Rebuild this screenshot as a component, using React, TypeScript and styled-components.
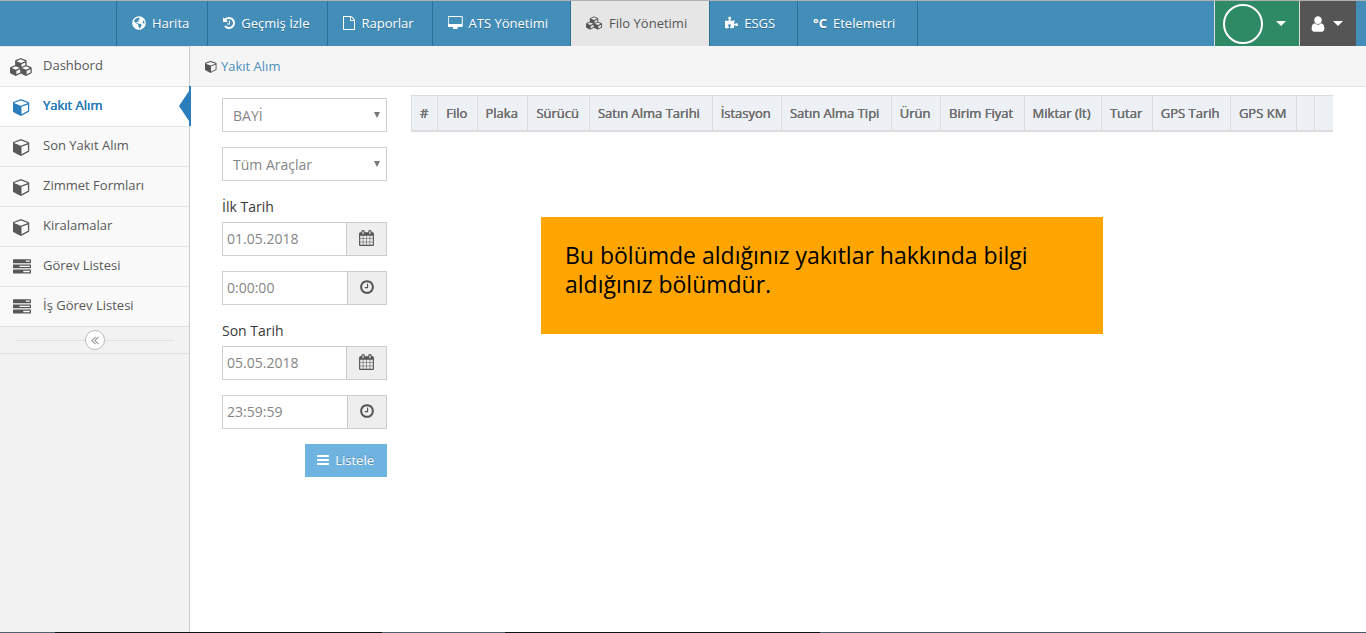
import React from "react";
import styled, { createGlobalStyle, css } from "styled-components";
import { FaGlobeAmericas, FaPuzzlePiece } from "react-icons/fa";

const GlobalStyle = createGlobalStyle`
  * { box-sizing: border-box; }
  body {
    margin: 0;
    background: #fff;
    color: #393939;
    font-family: "Open Sans", "Noto Sans", sans-serif;
    font-size: 13px;
    line-height: 20px;
  }
`;

const glyphs = {
  cube: {
    box: "0 0 1664 1792",
    d: "M832 1629l640-349v-636l-640 233v752zm-64-865l698-254-698-254-698 254zm832-252v768q0 35-18 65t-49 47l-704 384q-28 16-61 16t-61-16l-704-384q-31-17-49-47t-18-65v-768q0-40 23-73t61-50l704-256q22-8 44-8t44 8l704 256q38 17 61 50t23 73z",
  },
  cubes: {
    box: "0 0 2304 1792",
    d: "M640 1632l384-192v-314l-384 164v342zm-64-454l404-173-404-173-404 173zm1088 454l384-192v-314l-384 164v342zm-64-454l404-173-404-173-404 173zm-448-293l384-165v-266l-384 164v267zm-64-379l441-189-441-189-441 189zm1088 518v416q0 36-19 67t-52 47l-448 224q-25 14-57 14t-57-14l-448-224q-4-2-7-4-2 2-7 4l-448 224q-25 14-57 14t-57-14l-448-224q-33-16-52-47t-19-67v-416q0-38 21.500-70t56.500-48l434-186v-400q0-38 21.500-70t56.500-48l448-192q23-10 50-10t50 10l448 192q35 16 56.500 48t21.500 70v400l434 186q36 16 57 48t21 70z",
  },
  history: {
    box: "128 0 1536 1792",
    d: "M1664 896q0 156-61 298t-164 245-245 164-298 61q-172 0-327-72.500t-264-204.500q-7-10-6.500-22.500t8.500-20.500l137-138q10-9 25-9 16 2 23 12 73 95 179 147t225 52q104 0 198.500-40.500t163.500-109.500 109.500-163.500 40.500-198.500-40.500-198.500-109.500-163.500-163.500-109.500-198.500-40.500q-98 0-188 35.500t-160 101.500l137 138q31 30 14 69-17 40-59 40h-448q-26 0-45-19t-19-45v-448q0-42 40-59 39-17 69 14l130 129q107-101 244.500-156.500t284.500-55.500q156 0 298 61t245 164 164 245 61 298zm-640-288v448q0 14-9 23t-23 9h-320q-14 0-23-9t-9-23v-64q0-14 9-23t23-9h224v-352q0-14 9-23t23-9h64q14 0 23 9t9 23z",
  },
  file: {
    box: "128 0 1536 1792",
    d: "M1596 380q28 28 48 76t20 88v1152q0 40-28 68t-68 28h-1344q-40 0-68-28t-28-68v-1600q0-40 28-68t68-28h896q40 0 88 20t76 48zm-444-244v376h376q-10-29-22-41l-313-313q-12-12-41-22zm384 1528v-1024h-416q-40 0-68-28t-28-68v-416h-768v1536h1280z",
  },
  desktop: {
    box: "0 0 1856 1792",
    d: "M1728 992v-832q0-13-9.500-22.500t-22.500-9.500h-1600q-13 0-22.500 9.500t-9.500 22.500v832q0 13 9.500 22.500t22.500 9.500h1600q13 0 22.500-9.500t9.500-22.500zm128-832v1088q0 66-47 113t-113 47h-544q0 37 16 77.500t32 71 16 43.500q0 26-19 45t-45 19h-512q-26 0-45-19t-19-45q0-14 16-44t32-70 16-78h-544q-66 0-113-47t-47-113v-1088q0-66 47-113t113-47h1600q66 0 113 47t47 113z",
  },
  user: {
    box: "192 0 1408 1792",
    d: "M1536 1399q0 109-62.500 187t-150.500 78h-854q-88 0-150.500-78t-62.500-187q0-85 8.500-160.500t31.500-152 58.500-131 94-89 134.500-34.500q131 128 313 128t313-128q76 0 134.500 34.500t94 89 58.500 131 31.500 152 8.500 160.500zm-256-887q0 159-112.500 271.500t-271.500 112.500-271.500-112.500-112.500-271.500 112.500-271.500 271.500-112.500 271.500 112.500 112.500 271.500z",
  },
  calendar: {
    box: "64 0 1664 1792",
    d: "M192 1664h288v-288h-288v288zm352 0h320v-288h-320v288zm-352-352h288v-320h-288v320zm352 0h320v-320h-320v320zm-352-384h288v-288h-288v288zm736 736h320v-288h-320v288zm-384-736h320v-288h-320v288zm768 736h288v-288h-288v288zm-384-352h320v-320h-320v320zm-352-864v-288q0-13-9.500-22.500t-22.500-9.500h-64q-13 0-22.500 9.500t-9.500 22.500v288q0 13 9.500 22.500t22.500 9.500h64q13 0 22.500-9.500t9.500-22.500zm736 864h288v-320h-288v320zm-384-384h320v-288h-320v288zm384 0h288v-288h-288v288zm32-480v-288q0-13-9.500-22.500t-22.500-9.500h-64q-13 0-22.500 9.500t-9.500 22.500v288q0 13 9.500 22.500t22.500 9.500h64q13 0 22.500-9.500t9.500-22.500zm384-64v1280q0 52-38 90t-90 38h-1408q-52 0-90-38t-38-90v-1280q0-52 38-90t90-38h128v-96q0-66 47-113t113-47h64q66 0 113 47t47 113v96h384v-96q0-66 47-113t113-47h64q66 0 113 47t47 113v96h128q52 0 90 38t38 90z",
  },
  clock: {
    box: "128 0 1536 1792",
    d: "M1024 544v448q0 14-9 23t-23 9h-320q-14 0-23-9t-9-23v-64q0-14 9-23t23-9h224v-352q0-14 9-23t23-9h64q14 0 23 9t9 23zm416 352q0-148-73-273t-198-198-273-73-273 73-198 198-73 273 73 273 198 198 273 73 273-73 198-198 73-273zm224 0q0 209-103 385.500t-279.500 279.500-385.500 103-385.500-103-279.500-279.500-103-385.500 103-385.500 279.500-279.500 385.500-103 385.500 103 279.500 279.500 103 385.500z",
  },
  tasks: {
    box: "0 0 1792 1792",
    d: "M1024 1408h640v-128h-640v128zm-384-512h1024v-128h-1024v128zm640-512h384v-128h-384v128zm512 832v256q0 26-19 45t-45 19h-1664q-26 0-45-19t-19-45v-256q0-26 19-45t45-19h1664q26 0 45 19t19 45zm0-512v256q0 26-19 45t-45 19h-1664q-26 0-45-19t-19-45v-256q0-26 19-45t45-19h1664q26 0 45 19t19 45zm0-512v256q0 26-19 45t-45 19h-1664q-26 0-45-19t-19-45v-256q0-26 19-45t45-19h1664q26 0 45 19t19 45z",
  },
  bars: {
    box: "128 0 1536 1792",
    d: "M1664 1344v128q0 26-19 45t-45 19h-1408q-26 0-45-19t-19-45v-128q0-26 19-45t45-19h1408q26 0 45 19t19 45zm0-512v128q0 26-19 45t-45 19h-1408q-26 0-45-19t-19-45v-128q0-26 19-45t45-19h1408q26 0 45 19t19 45zm0-512v128q0 26-19 45t-45 19h-1408q-26 0-45-19t-19-45v-128q0-26 19-45t45-19h1408q26 0 45 19t19 45z",
  },
  doubleLeft: {
    box: "400 0 1024 1792",
    d: "M1011 1376q0 13-10 23l-50 50q-10 10-23 10t-23-10l-466-466q-10-10-10-23t10-23l466-466q10-10 23-10t23 10l50 50q10 10 10 23t-10 23l-393 393 393 393q10 10 10 23zm384 0q0 13-10 23l-50 50q-10 10-23 10t-23-10l-466-466q-10-10-10-23t10-23l466-466q10-10 23-10t23 10l50 50q10 10 10 23t-10 23l-393 393 393 393q10 10 10 23z",
  },
};

type GlyphName = keyof typeof glyphs;

const Svg = styled.svg`
  display: block;
  flex: none;
  fill: currentColor;
`;

function Glyph({ name, width, height }: { name: GlyphName; width: number; height: number }) {
  return (
    <Svg viewBox={glyphs[name].box} width={width} height={height} aria-hidden="true">
      <path d={glyphs[name].d} />
    </Svg>
  );
}

const Page = styled.div`
  display: flex;
  flex-direction: column;
  min-height: 100vh;
`;

const Header = styled.header`
  display: flex;
  height: 46px;
  border-top: 1px solid #b1b1b1;
  background: #438eb9;
  padding: 0 10px 0 116px;
`;

const Nav = styled.nav`
  display: flex;
  flex: 1;
`;

const NavLink = styled.a<{ $active?: boolean; $wide?: boolean }>`
  display: flex;
  align-items: center;
  gap: 6px;
  padding: 0 ${(p) => (p.$wide ? 22 : 18)}px 2px 15px;
  border-left: 1px solid #2c6f98;
  color: #fff;
  text-decoration: none;
  text-shadow: 0 1px 0 rgba(0, 0, 0, 0.25);
  white-space: nowrap;
  ${(p) =>
    p.$active &&
    css`
      background: #e6e6e6;
      color: #555;
      text-shadow: none;
    `}
`;

const NavEnd = styled.span`
  border-left: 1px solid #2c6f98;
`;

const Celsius = styled.span`
  font-weight: 700;
`;

const HeaderButton = styled.button<{ $tone: "green" | "dark" }>`
  display: flex;
  align-items: center;
  gap: ${(p) => (p.$tone === "green" ? 13 : 8)}px;
  padding: 0 13px 0 ${(p) => (p.$tone === "green" ? 8 : 11)}px;
  border: 0;
  border-left: 1px solid #ddd;
  background: ${(p) => (p.$tone === "green" ? "#2e8965" : "#555")};
  color: #fff;
`;

const Ring = styled.span`
  width: 40px;
  height: 40px;
  border: 2px solid #fff;
  border-radius: 50%;
`;

const Caret = styled.span`
  border: 5px solid transparent;
  border-top: 5px solid #fff;
  border-bottom: 0;
`;

const Body = styled.div`
  display: flex;
  flex: 1;
`;

const Sidebar = styled.aside`
  width: 190px;
  flex: none;
  border-right: 1px solid #ccc;
  background: #f2f2f2;
`;

const SideList = styled.ul`
  margin: 0;
  padding: 0;
  list-style: none;
`;

const SideItem = styled.li`
  border-top: 1px solid #e5e5e5;
`;

const SideLink = styled.a<{ $active?: boolean }>`
  display: flex;
  align-items: center;
  position: relative;
  height: 39px;
  padding-bottom: 4px;
  background: #f9f9f9;
  color: #585858;
  text-decoration: none;
  ${(p) =>
    p.$active &&
    css`
      background: #fff;
      color: #2b7dbc;
      text-shadow: 0 0 0 #2b7dbc, 0 0 0 #2b7dbc;
      &::before {
        content: "";
        position: absolute;
        right: 0;
        top: 4px;
        border: 15px solid transparent;
        border-right: 10px solid #2b7dbc;
        border-left: 0;
      }
      &::after {
        content: "";
        position: absolute;
        right: -2px;
        top: -1px;
        bottom: 0;
        width: 2px;
        background: #2b7dbc;
      }
    `}
`;

const SideIcon = styled.span`
  display: flex;
  justify-content: center;
  width: 43px;
  padding-top: 5px;
`;

const Collapse = styled.div`
  display: flex;
  align-items: center;
  height: 28px;
  padding: 0 15px;
  border: 1px solid #e0e0e0;
  border-width: 1px 0;

  &::before,
  &::after {
    content: "";
    flex: 1;
    height: 1px;
    background: #e0e0e0;
  }
`;

const CollapseButton = styled.button`
  display: grid;
  place-items: center;
  width: 20px;
  height: 20px;
  padding: 0;
  border: 1px solid #bbb;
  border-radius: 50%;
  background: #fff;
  color: #999;
`;

const Main = styled.main`
  flex: 1;
  min-width: 0;
`;

const Breadcrumb = styled.div`
  display: flex;
  align-items: center;
  gap: 4px;
  height: 41px;
  padding: 0 15px;
  border-bottom: 1px solid #e5e5e5;
  background: #f5f5f5;
  color: #555;
`;

const CrumbLink = styled.a`
  color: #4c8fbd;
  text-decoration: none;
`;

const Content = styled.div`
  display: flex;
  align-items: flex-start;
  gap: 24px;
  padding: 8px 33px 0 32px;
`;

const Filters = styled.form`
  display: flex;
  flex: none;
  flex-direction: column;
  gap: 15px;
  width: 165px;
  padding-top: 3px;
`;

const SelectBox = styled.div`
  display: flex;
  position: relative;
  &::after {
    content: "";
    position: absolute;
    right: 7px;
    top: 14px;
    border: 3px solid transparent;
    border-top: 6px solid #777;
    border-bottom: 0;
    pointer-events: none;
  }
`;

const Select = styled.select`
  appearance: none;
  width: 100%;
  height: 34px;
  padding: 0 10px;
  border: 1px solid #d0d0d0;
  border-radius: 0;
  background: #fff;
  color: #858585;
  font: 14px "Open Sans", sans-serif;
`;

const Label = styled.label`
  display: block;
  height: 26px;
  font-size: 14px;
  line-height: 21px;
`;

const InputGroup = styled.div`
  display: flex;
  height: 34px;
`;

const Input = styled.input`
  flex: 1;
  min-width: 0;
  padding: 0 4px 2px;
  border: 1px solid #d0d0d0;
  border-right: 0;
  color: #858585;
  font: 14px "Open Sans", sans-serif;
`;

const Addon = styled.button<{ $narrow?: boolean }>`
  display: flex;
  justify-content: center;
  width: ${(p) => (p.$narrow ? 40 : 41)}px;
  padding: 7px 0 0;
  border: 1px solid #ccc;
  background: #eee;
  color: #555;
`;

const Submit = styled.button`
  display: flex;
  align-items: center;
  align-self: flex-end;
  gap: 6px;
  height: 33px;
  padding: 0 13px 2px 12px;
  border: 0;
  background: #6fb3e0;
  color: #fff;
  font: 13px "Open Sans", sans-serif;
  text-shadow: 0 -1px 0 rgba(0, 0, 0, 0.25);
`;

const Results = styled.section`
  flex: 1;
  min-width: 0;
`;

const Table = styled.table`
  width: 100%;
  border-collapse: separate;
  border-spacing: 0;
  border-left: 1px solid #ddd;
`;

const Th = styled.th`
  height: 37px;
  padding: 0 8px;
  border: 1px solid #ddd;
  border-width: 1px 1px 2px 0;
  background: #edf1f6;
  color: #707070;
  font-weight: 400;
  text-align: left;
  text-shadow: 0 0 0 #707070, 0 0 0 #707070;
  white-space: nowrap;
  &:last-child {
    width: 18px;
    border-right: 0;
  }
`;

const Notice = styled.p`
  max-width: 562px;
  min-height: 117px;
  margin: 85px 0 0 130px;
  padding: 24px;
  background: #ffa500;
  color: #000;
  font-size: 23px;
  line-height: 29px;
`;

const BottomEdge = styled.footer`
  height: 1px;
  margin-top: -1px;
  position: relative;
  background: linear-gradient(
    to right,
    #4d616d 0 4%,
    #101014 4% 28%,
    #4d616d 28% 37%,
    #101014 37% 60%,
    #465863 60% 100%
  );
`;

const sections = [
  { label: "Harita", icon: <FaGlobeAmericas size={14} /> },
  { label: "Geçmiş İzle", icon: <Glyph name="history" width={12} height={14} /> },
  { label: "Raporlar", icon: <Glyph name="file" width={12} height={14} /> },
  { label: "ATS Yönetimi", icon: <Glyph name="desktop" width={15} height={14} />, wide: true },
  { label: "Filo Yönetimi", icon: <Glyph name="cubes" width={17} height={14} />, wide: true, active: true },
  { label: "ESGS", icon: <FaPuzzlePiece size={13} />, wide: true },
  { label: "Etelemetri", icon: <Celsius>°C</Celsius>, wide: true },
];

const menu: { label: string; icon: GlyphName; width: number; active?: boolean }[] = [
  { label: "Dashbord", icon: "cubes", width: 23 },
  { label: "Yakıt Alım", icon: "cube", width: 17, active: true },
  { label: "Son Yakıt Alım", icon: "cube", width: 17 },
  { label: "Zimmet Formları", icon: "cube", width: 17 },
  { label: "Kiralamalar", icon: "cube", width: 17 },
  { label: "Görev Listesi", icon: "tasks", width: 18 },
  { label: "İş Görev Listesi", icon: "tasks", width: 18 },
];

const columns = [
  "#", "Filo", "Plaka", "Sürücü", "Satın Alma Tarihi", "İstasyon", "Satın Alma Tipi",
  "Ürün", "Birim Fiyat", "Miktar (lt)", "Tutar", "GPS Tarih", "GPS KM", "", "",
];

function DateRange({ id, label, date, time }: { id: string; label: string; date: string; time: string }) {
  return (
    <>
      <div>
        <Label htmlFor={id}>{label}</Label>
        <InputGroup>
          <Input id={id} defaultValue={date} />
          <Addon type="button" aria-label={`${label} takvim`}>
            <Glyph name="calendar" width={15} height={16} />
          </Addon>
        </InputGroup>
      </div>
      <InputGroup>
        <Input aria-label={`${label} saat`} defaultValue={time} />
        <Addon type="button" $narrow aria-label={`${label} saat seç`}>
          <Glyph name="clock" width={14} height={16} />
        </Addon>
      </InputGroup>
    </>
  );
}

export default function App() {
  return (
    <Page>
      <GlobalStyle />
      <Header>
        <Nav>
          {sections.map((s) => (
            <NavLink key={s.label} href="#" $active={s.active} $wide={s.wide}>
              {s.icon}
              {s.label}
            </NavLink>
          ))}
          <NavEnd />
        </Nav>
        <HeaderButton $tone="green" aria-label="Firma">
          <Ring />
          <Caret />
        </HeaderButton>
        <HeaderButton $tone="dark" aria-label="Kullanıcı">
          <Glyph name="user" width={14} height={18} />
          <Caret />
        </HeaderButton>
      </Header>
      <Body>
        <Sidebar>
          <SideList>
            {menu.map((m) => (
              <SideItem key={m.label}>
                <SideLink href="#" $active={m.active}>
                  <SideIcon>
                    <Glyph name={m.icon} width={m.width} height={18} />
                  </SideIcon>
                  {m.label}
                </SideLink>
              </SideItem>
            ))}
          </SideList>
          <Collapse>
            <CollapseButton aria-label="Menüyü daralt">
              <Glyph name="doubleLeft" width={8} height={14} />
            </CollapseButton>
          </Collapse>
        </Sidebar>
        <Main>
          <Breadcrumb>
            <Glyph name="cube" width={12} height={13} />
            <CrumbLink href="#">Yakıt Alım</CrumbLink>
          </Breadcrumb>
          <Content>
            <Filters>
              <SelectBox>
                <Select aria-label="Filo">
                  <option>BAYİ</option>
                </Select>
              </SelectBox>
              <SelectBox>
                <Select aria-label="Araç">
                  <option>Tüm Araçlar</option>
                </Select>
              </SelectBox>
              <DateRange id="first-date" label="İlk Tarih" date="01.05.2018" time="0:00:00" />
              <DateRange id="last-date" label="Son Tarih" date="05.05.2018" time="23:59:59" />
              <Submit type="button">
                <Glyph name="bars" width={12} height={14} />
                Listele
              </Submit>
            </Filters>
            <Results>
              <Table>
                <thead>
                  <tr>
                    {columns.map((c, i) => (
                      <Th key={i} scope="col">{c}</Th>
                    ))}
                  </tr>
                </thead>
              </Table>
              <Notice>Bu bölümde aldığınız yakıtlar hakkında bilgi aldığınız bölümdür.</Notice>
            </Results>
          </Content>
        </Main>
      </Body>
      <BottomEdge />
    </Page>
  );
}
